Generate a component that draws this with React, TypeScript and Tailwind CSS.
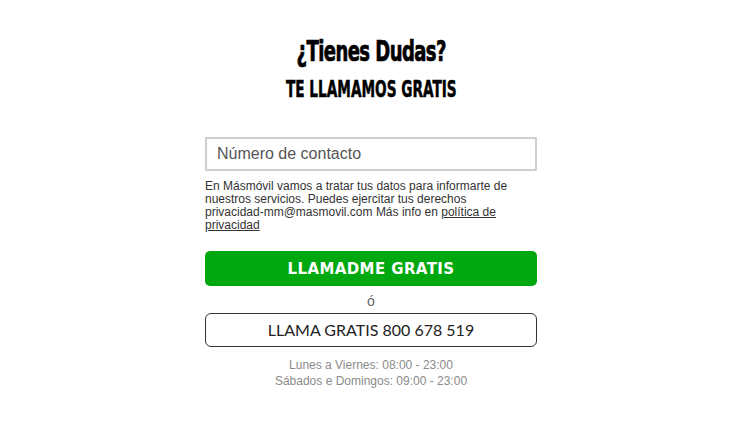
export default function App() {
  return (
    <main className="min-h-[423px] w-full bg-white pr-[8px]" style={{ fontFamily: '"Liberation Sans", Arial, sans-serif' }}>
      <div className="mx-auto flex w-[332px] flex-col items-center pt-[36px]">
        <h1
          className="scale-x-[0.69] whitespace-nowrap text-center text-[29px] font-bold leading-[30px] tracking-[-0.8px] text-black [-webkit-text-stroke:0.7px_black]"
          style={{ fontFamily: '"DejaVu Sans Condensed", sans-serif' }}
        >
          ¿Tienes Dudas?
        </h1>
        <h2
          className="mt-[11px] scale-x-[0.66] whitespace-nowrap text-center text-[23px] font-bold leading-[24px] text-black [-webkit-text-stroke:0.5px_black]"
          style={{ fontFamily: '"DejaVu Sans Condensed", sans-serif' }}
        >
          TE LLAMAMOS GRATIS
        </h2>

        <input
          type="tel"
          placeholder="Número de contacto"
          className="mt-[36px] h-[34px] w-full border-2 border-[#cfcfcf] bg-white px-[10px] text-[16px] text-[#333] outline-none placeholder:text-[#555]"
        />

        <p className="mt-[9px] w-full text-[12px] leading-[13px] text-[#333]">
          En Másmóvil vamos a tratar tus datos para informarte de nuestros servicios. Puedes ejercitar tus derechos
          <br />
          privacidad-mm@masmovil.com Más info en{" "}
          <a href="#" className="underline">
            política de privacidad
          </a>
        </p>

        <button
          type="button"
          className="mt-[19px] h-[35px] w-full rounded-[5px] bg-[#00a80f] pt-[2px] text-[15px] font-bold tracking-[0.4px] text-white"
          style={{ fontFamily: '"DejaVu Sans", Verdana, sans-serif' }}
        >
          LLAMADME GRATIS
        </button>

        <span className="mt-[6px] text-[14px] leading-[18px] text-[#666]">ó</span>

        <button
          type="button"
          className="mt-[3px] h-[34px] w-full rounded-[6px] border border-[#333] bg-white text-[16px] text-[#222]"
          style={{ fontFamily: 'Lato, "Open Sans", sans-serif' }}
        >
          LLAMA GRATIS 800 678 519
        </button>

        <div className="mt-[10px] text-center text-[12px] leading-[16px] text-[#8a8a8a]">
          <p>Lunes a Viernes: 08:00 - 23:00</p>
          <p>Sábados e Domingos: 09:00 - 23:00</p>
        </div>
      </div>
    </main>
  );
}
